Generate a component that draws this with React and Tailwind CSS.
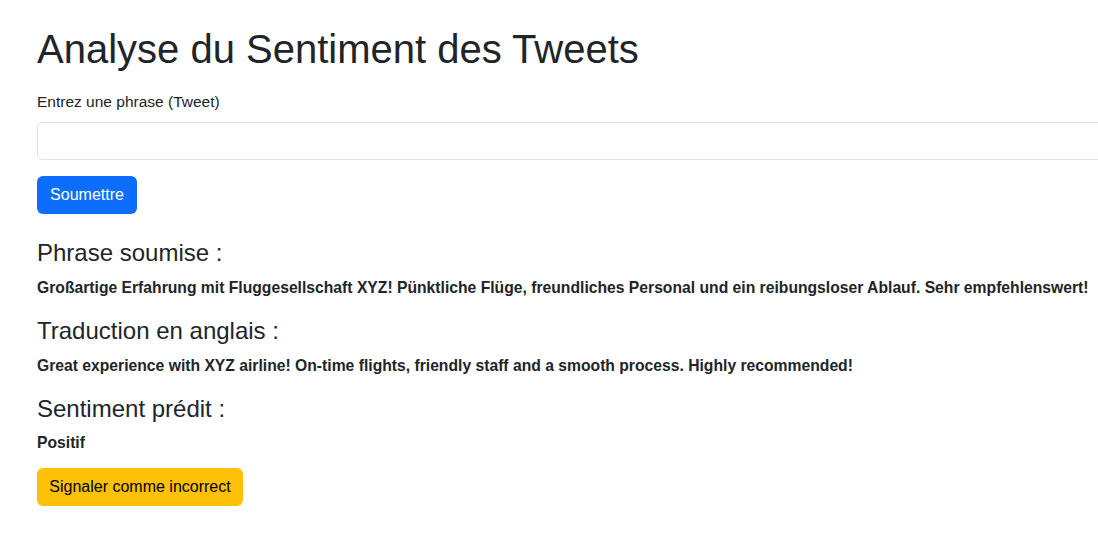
const headingCls = 'text-[24px] leading-[28.8px] font-medium mb-2 pt-[1px]';
const strongCls = 'text-[15.7px] leading-[24px] font-bold mb-4 whitespace-nowrap';

export default function App() {
  return (
    <div
      className="w-full overflow-hidden bg-white text-[#212529] min-h-[550px]"
      style={{ fontFamily: '"Liberation Sans", Arial, sans-serif' }}
    >
      <div className="pl-[37px] pt-[25px] w-[1140px]">
        <h1 className="text-[40px] leading-[48px] font-medium mb-[17px]">Analyse du Sentiment des Tweets</h1>

        <form onSubmit={(e) => e.preventDefault()}>
          <label className="block text-[15.5px] leading-[24px] mb-2">Entrez une phrase (Tweet)</label>
          <input
            type="text"
            className="block w-[1100px] h-[38px] px-3 rounded-[6px] border border-[#dee2e6] bg-white text-base outline-none"
          />
          <button
            type="submit"
            className="mt-4 h-[38px] w-[100px] rounded-[6px] bg-[#0d6efd] text-white text-[16px]"
          >
            Soumettre
          </button>
        </form>

        <div className="mt-6">
          <h4 className={headingCls}>Phrase soumise :</h4>
          <p className={strongCls}>
            Großartige Erfahrung mit Fluggesellschaft XYZ! Pünktliche Flüge, freundliches Personal und ein reibungsloser Ablauf. Sehr empfehlenswert!
          </p>

          <h4 className={headingCls}>Traduction en anglais :</h4>
          <p className={strongCls}>
            Great experience with XYZ airline! On-time flights, friendly staff and a smooth process. Highly recommended!
          </p>

          <h4 className={headingCls}>Sentiment prédit :</h4>
          <p className="text-[15.7px] leading-[24px] font-bold mb-[13px]">Positif</p>

          <button
            type="button"
            className="h-[38px] w-[206px] rounded-[6px] bg-[#ffc107] text-black text-[16px]"
          >
            Signaler comme incorrect
          </button>
        </div>
      </div>
    </div>
  );
}
